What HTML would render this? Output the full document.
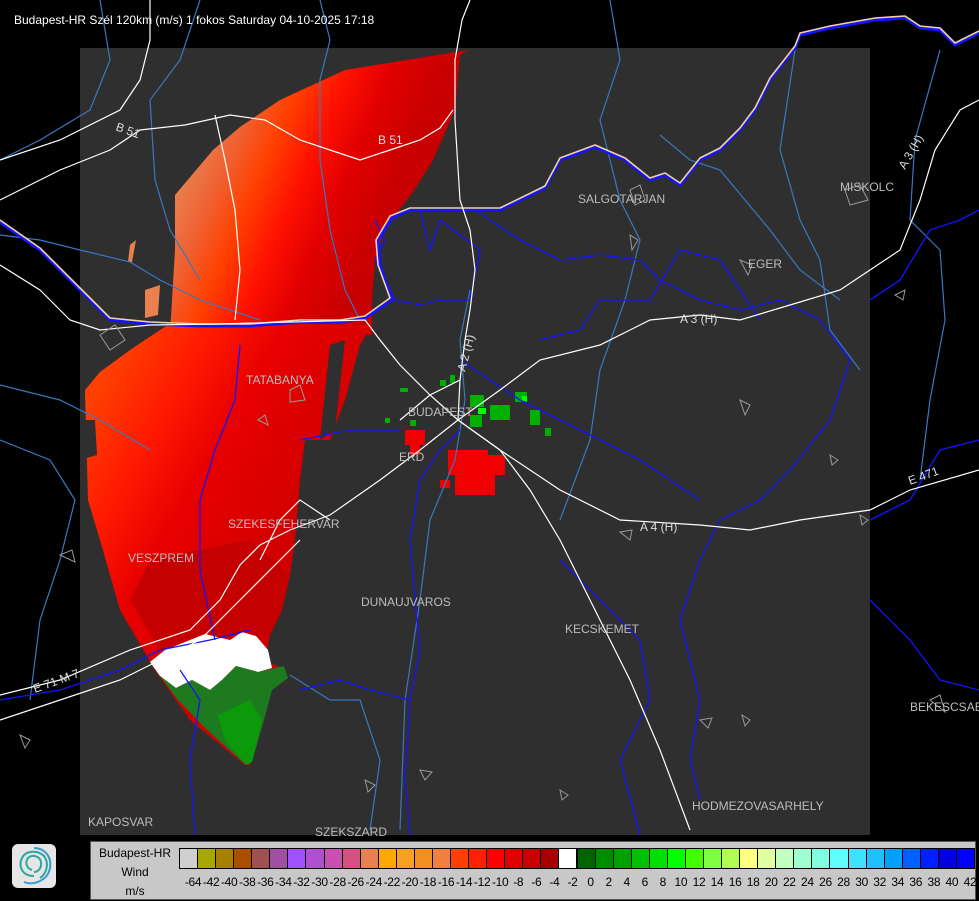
<!DOCTYPE html>
<html><head><meta charset="utf-8"><style>
html,body{margin:0;padding:0;background:#000;}
body{width:979px;height:900px;position:relative;overflow:hidden;font-family:"Liberation Sans",sans-serif;}
svg{position:absolute;left:0;top:0}
.t{font-family:"Liberation Sans",sans-serif;font-size:12px;fill:#bdbdbd}
#legend{position:absolute;left:90px;top:841px;width:886px;height:59px;background:#c8c8c8;border:1px solid #555;box-sizing:border-box}
#lt{position:absolute;left:0;top:2px;width:88px;text-align:center;font-size:12px;line-height:19px;color:#000}
.sw{position:absolute;top:6px;height:21px;border:1px solid #000;box-sizing:border-box}
.lb{position:absolute;top:33px;font-size:12px;color:#000;width:24px;text-align:center;letter-spacing:-0.3px}
</style></head><body>
<svg width="979" height="900" viewBox="0 0 979 900">
<defs>
<linearGradient id="gu" gradientUnits="userSpaceOnUse" x1="185" y1="170" x2="370" y2="250">
<stop offset="0" stop-color="#e88050"/><stop offset="0.18" stop-color="#f06030"/><stop offset="0.35" stop-color="#ff4000"/><stop offset="0.55" stop-color="#ff1000"/><stop offset="0.75" stop-color="#e00000"/><stop offset="1" stop-color="#c80000"/></linearGradient>
<linearGradient id="gl" gradientUnits="userSpaceOnUse" x1="90" y1="400" x2="300" y2="520">
<stop offset="0" stop-color="#ff4000"/><stop offset="0.3" stop-color="#ff1800"/><stop offset="0.55" stop-color="#e80000"/><stop offset="1" stop-color="#d00000"/></linearGradient>
</defs>
<rect x="80" y="48" width="790" height="787" fill="#2f2f2f"/>
<polygon fill="url(#gu)" points="345,70 468,50 460,55 455,110 433,160 413,192 385,228 375,260 372,300 372,335 330,335 170,335 172,300 175,250 175,195 213,150 240,127 280,100"/>
<polygon fill="url(#gl)" points="168,325 372,325 360,345 345,400 330,440 305,440 300,480 295,540 290,575 282,610 270,635 265,660 285,670 270,690 262,720 250,765 245,765 190,720 155,670 120,610 100,540 88,500 85,390 100,372 130,350 160,330"/>
<polygon fill="#c40000" points="150,560 250,540 290,575 282,610 270,635 200,640 160,650 130,600"/>
<polygon fill="#2f2f2f" points="330,345 345,340 335,430 320,440"/>
<polygon fill="#2f2f2f" points="80,420 95,420 97,455 80,460"/>
<polygon fill="#e88050" points="145,290 160,285 158,315 145,318"/>
<polygon fill="#e88050" points="130,245 136,240 132,262 128,262"/>
<polygon fill="#ffffff" points="150,662 165,650 190,640 205,634 230,640 242,632 256,636 268,650 272,668 258,672 236,666 222,680 210,690 192,680 176,688 160,676"/>
<polygon fill="#1e7a1e" points="160,676 176,688 192,680 210,690 222,680 236,666 258,672 284,666 288,678 272,690 264,720 252,762 246,765 205,728 178,700"/>
<polygon fill="#0a9a0a" points="218,715 250,700 262,720 252,762 246,765 225,740"/>
<g fill="#00b000">
<rect x="400" y="388" width="8" height="4"/><rect x="440" y="380" width="6" height="6"/><rect x="470" y="395" width="14" height="12"/><rect x="490" y="405" width="20" height="15"/><rect x="515" y="392" width="12" height="10"/><rect x="530" y="410" width="10" height="15"/><rect x="410" y="420" width="6" height="6"/><rect x="470" y="415" width="12" height="12"/><rect x="545" y="428" width="6" height="8"/><rect x="385" y="418" width="5" height="5"/><rect x="450" y="375" width="5" height="8"/></g>
<g fill="#00ff00"><rect x="478" y="408" width="8" height="6"/><rect x="522" y="396" width="5" height="5"/></g>
<g fill="#f00000">
<rect x="448" y="450" width="40" height="25"/><rect x="455" y="475" width="40" height="20"/><rect x="485" y="455" width="20" height="20"/><rect x="405" y="430" width="20" height="15"/><rect x="410" y="445" width="10" height="10"/><rect x="440" y="480" width="10" height="8"/></g>
<g fill="none" stroke="#3a78c0" stroke-width="1.2">
<path d="M100,0 L110,60 L90,110 L40,140 L0,160"/>
<path d="M0,235 L40,240 L80,250 L130,262 L160,280 L200,300 L260,320"/>
<path d="M0,385 L60,400 L100,420 L150,450"/>
<path d="M0,440 L50,460 L75,500 L60,560 L40,620 L30,700"/>
<path d="M200,0 L180,60 L150,100 L155,180 L170,230 L200,280"/>
<path d="M320,0 L330,40 L320,80 L320,160 L330,230 L345,290 L360,320"/>
<path d="M610,0 L620,60 L600,120 L620,200 L640,240 L625,300 L600,370 L590,440 L560,520"/>
<path d="M795,50 L780,150 L800,220 L820,260 L830,330 L860,370"/>
<path d="M470,290 L460,340 L465,400 L455,460 L430,520 L420,600 L405,700 L400,830"/>
<path d="M660,135 L690,160 L720,170 L770,230 L800,270 L840,300"/>
<path d="M940,50 L915,140 L910,220 L940,250 L945,320 L930,400 L920,480"/>
<path d="M290,675 L330,700 L360,700 L380,760 L370,830"/>
</g>
<g fill="none" stroke="#1414ff" stroke-width="1.3">
<path d="M375,220 L385,240 L375,260 L395,300 L420,305 L440,300 L470,300 L480,250 L460,235 L440,220 L430,250 L420,210"/>
<path d="M460,430 L440,450 L420,480 L410,540 L415,600 L420,650 L410,700 L405,780 L410,835"/>
<path d="M475,210 L520,240 L560,260 L600,255 L640,260 L660,280 L700,300 L740,310 L780,300 L820,320 L850,360 L830,420 L790,470 L760,500 L720,520 L700,560 L680,620 L700,700 L690,760 L700,800"/>
<path d="M540,340 L580,330 L600,300 L650,300 L680,250 L720,260 L760,320"/>
<path d="M460,360 L520,400 L580,430 L640,460 L700,500"/>
<path d="M240,345 L235,400 L215,450 L200,500 L200,570 L215,640"/>
<path d="M300,440 L350,430 L400,430"/>
<path d="M870,300 L900,280 L930,230 L960,220 L979,210"/>
<path d="M870,520 L910,500 L940,450 L979,440"/>
<path d="M870,600 L910,640 L940,680 L979,690"/>
<path d="M180,670 L200,700 L190,760 L195,835"/>
<path d="M0,700 L60,690 L120,670 L160,650 L210,640 L250,630"/>
<path d="M300,690 L340,680 L370,690 L410,700"/>
<path d="M560,560 L600,600 L640,640 L650,700 L620,760 L640,835"/>
</g>
<g fill="none" stroke-linejoin="round">
<path d="M0,222 L40,250 L80,290 L110,320 L150,324 L200,326 L250,326 L300,322 L340,322 L365,318 L392,300 L380,265 L378,240 L392,218 L410,210 L460,210 L500,210 L545,188 L560,160 L595,147 L625,160 L650,180 L665,175 L680,185 L700,160 L720,150 L740,130 L755,110 L770,80 L795,48 L800,35 L830,28 L875,20 L905,18 L920,28 L940,30 L955,45 L979,33" stroke="#1414ff" stroke-width="3"/>
<path d="M0,220 L40,248 L80,288 L110,318 L150,322 L200,324 L250,324 L300,320 L340,320 L365,316 L390,298 L378,265 L376,240 L390,216 L410,208 L460,208 L500,208 L545,186 L560,158 L595,145 L625,158 L650,178 L665,173 L680,183 L700,158 L720,148 L740,128 L755,108 L770,78 L795,46 L800,33 L830,26 L875,18 L905,16 L920,26 L940,28 L955,43 L979,31" stroke="#f5d2a0" stroke-width="1.6"/>
</g>
<g fill="none" stroke="#ffffff" stroke-width="1.2">
<path d="M470,0 L462,20 L455,60 L455,120 L460,200 L470,230 L475,270 L470,310 L465,340 L460,380 L458,420"/>
<path d="M0,160 L60,140 L120,110 L140,80 L150,40 L150,0"/>
<path d="M0,200 L60,170 L110,150 L140,130 L185,125 L230,115 L265,120 L300,140 L330,150 L360,160 L390,150 L420,140 L440,128 L453,110"/>
<path d="M215,115 L225,160 L235,210 L240,270 L235,320"/>
<path d="M0,265 L40,290 L70,320 L100,330 L150,325 L220,324 L365,320 L380,340 L400,365 L430,395 L458,420"/>
<path d="M458,420 L500,390 L540,360 L600,345 L650,320 L700,315 L740,320 L790,305 L840,290 L870,270 L900,250 L920,200 L935,150 L960,110 L979,100"/>
<path d="M458,420 L500,450 L560,490 L620,520 L700,525 L750,530 L800,520 L870,510 L910,490 L979,470"/>
<path d="M458,420 L500,450 L530,490 L560,540 L600,620 L630,680 L660,750 L690,830"/>
<path d="M458,420 L420,450 L380,480 L330,515 L290,530 L260,545 L240,565 L220,600 L190,630 L130,650 L60,680 L0,695"/>
<path d="M0,720 L60,700 L120,680 L160,660 L200,640 L240,600 L280,560 L300,540"/>
<path d="M330,520 L300,500 L280,520 L260,560"/>
<path d="M460,380 L430,395 L400,420"/>
</g>
<g fill="none" stroke="#999" stroke-width="1">
<path d="M100,335 L115,325 L125,340 L110,350 Z"/><path d="M290,390 L300,385 L305,400 L290,402 Z"/>
<path d="M258,420 L265,415 L268,425 Z"/><path d="M630,235 L638,240 L632,250 Z"/><path d="M620,532 L632,530 L630,540 Z"/>
<path d="M740,400 L750,405 L745,415 Z"/><path d="M830,455 L838,460 L832,465 Z"/><path d="M860,515 L868,520 L862,525 Z"/>
<path d="M700,720 L712,718 L708,728 Z"/><path d="M742,715 L750,720 L745,726 Z"/><path d="M560,790 L568,795 L562,800 Z"/>
<path d="M365,780 L375,785 L368,792 Z"/><path d="M420,770 L432,772 L425,780 Z"/><path d="M740,260 L752,265 L748,275 Z"/>
<path d="M630,190 L640,185 L645,200 L635,205 Z"/><path d="M845,190 L860,185 L868,200 L850,205 Z"/><path d="M930,700 L940,695 L945,712 Z"/>
<path d="M60,555 L72,550 L75,562 Z"/><path d="M20,735 L30,740 L25,748 Z"/><path d="M895,295 L905,290 L903,300 Z"/>
</g>
<g class="t">
<text x="578" y="203">SALGOTARJAN</text>
<text x="748" y="268">EGER</text>
<text x="840" y="191">MISKOLC</text>
<text x="246" y="384">TATABANYA</text>
<text x="408" y="416">BUDAPEST</text>
<text x="399" y="461">ERD</text>
<text x="228" y="528">SZEKESFEHERVAR</text>
<text x="128" y="562">VESZPREM</text>
<text x="361" y="606">DUNAUJVAROS</text>
<text x="565" y="633">KECSKEMET</text>
<text x="692" y="810">HODMEZOVASARHELY</text>
<text x="88" y="826">KAPOSVAR</text>
<text x="315" y="836">SZEKSZARD</text>
<text x="910" y="711">BEKESCSABA</text>
<text x="680" y="323" fill="#ddd">A 3 (H)</text>
<text x="640" y="531" fill="#ddd">A 4 (H)</text>
<text x="378" y="144" fill="#ddd">B 51</text>
<text x="115" y="130" fill="#ddd" transform="rotate(20 115 130)">B 51</text>
<text x="910" y="485" fill="#ddd" transform="rotate(-20 910 485)">E 471</text>
<text x="35" y="693" fill="#ddd" transform="rotate(-20 35 693)">E 71 M 7</text>
<text x="465" y="372" fill="#ddd" transform="rotate(-75 465 372)">A 2 (H)</text>
<text x="905" y="170" fill="#ddd" transform="rotate(-60 905 170)">A 3 (H)</text>
</g>
<text x="14" y="24" font-family="Liberation Sans" font-size="12" fill="#fff">Budapest-HR Szél 120km (m/s) 1 fokos Saturday 04-10-2025 17:18</text>
<rect x="12" y="844" width="44" height="44" rx="6" fill="#e6e6e6"/>
<g fill="none" stroke="#2aa8a0" stroke-width="2">
<path d="M34,876 C22,876 18,866 22,858 C26,850 38,850 44,856 C50,864 46,874 40,878"/>
<path d="M32,870 C26,868 25,862 28,858 C32,854 40,856 41,862 C42,868 38,872 34,872"/>
<path d="M24,882 C34,886 48,880 50,868 C52,856 44,848 34,848" stroke="#3a9ad0"/>
</g>
</svg>
<div id="legend">
<div id="lt">Budapest-HR<br>Wind<br>m/s</div>
</div>
<script>
var cols=["#d0d0d0","#a8a800","#a88000","#a85000","#a05050","#a050a0","#a050ff","#b050d0","#c850b0","#d85080","#e88050","#ffa800","#f8a020","#f09020","#f08040","#ff4000","#ff2000","#ff0000","#e00000","#c80000","#a80000","#ffffff","#006400","#008c00","#00a000","#00c000","#00e000","#00ff00","#40ff00","#80ff40","#b0ff50","#ffff80","#e0ffa0","#c0ffc0","#a0ffd0","#80ffe0","#60ffff","#40e0ff","#20c0ff","#00a0ff","#0060ff","#0020ff","#0000e0","#0000ff"];
var labs=["-64","-42","-40","-38","-36","-34","-32","-30","-28","-26","-24","-22","-20","-18","-16","-14","-12","-10","-8","-6","-4","-2","0","2","4","6","8","10","12","14","16","18","20","22","24","26","28","30","32","34","36","38","40","42"];
var L=document.getElementById('legend');var x0=88,w=(883-88)/44;
for(var i=0;i<44;i++){var d=document.createElement('div');d.className='sw';d.style.left=(x0+i*w)+'px';d.style.width=(w+1)+'px';d.style.background=cols[i];L.appendChild(d);
var t=document.createElement('div');t.className='lb';t.style.left=(x0+(i+1)*w-16)+'px';t.textContent=labs[i];L.appendChild(t);}
</script>
</body></html>
